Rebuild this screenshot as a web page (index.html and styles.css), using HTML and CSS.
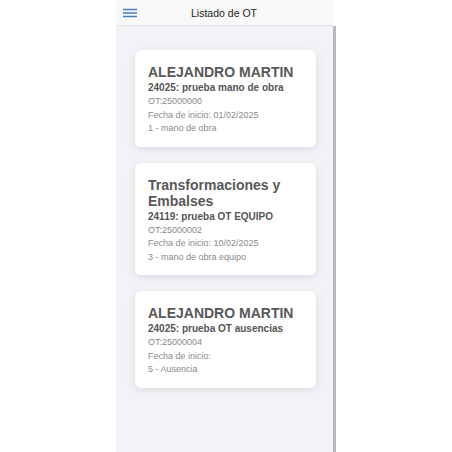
FILE: index.html
```html
<!DOCTYPE html>
<html lang="es">
<head>
<meta charset="utf-8">
<title>Listado de OT</title>
<link rel="stylesheet" href="styles.css">
</head>
<body>
<div class="app">
  <header class="header">
    <button class="menu" aria-label="Menú">
      <svg width="14" height="10" viewBox="0 0 14 10"><path d="M0 1.5H14M0 5H14M0 8.5H14" stroke="#4a7bbd" stroke-width="1.4" fill="none"/></svg>
    </button>
    <div class="title">Listado de OT</div>
  </header>
  <main class="content">
    <div class="card">
      <div class="name">ALEJANDRO MARTIN</div>
      <div class="job">24025: prueba mano de obra</div>
      <div class="meta">OT:25000000</div>
      <div class="meta">Fecha de inicio: 01/02/2025</div>
      <div class="meta">1 - mano de obra</div>
    </div>
    <div class="card">
      <div class="name">Transformaciones y Embalses</div>
      <div class="job">24119: prueba OT EQUIPO</div>
      <div class="meta">OT:25000002</div>
      <div class="meta">Fecha de inicio: 10/02/2025</div>
      <div class="meta">3 - mano de obra equipo</div>
    </div>
    <div class="card">
      <div class="name">ALEJANDRO MARTIN</div>
      <div class="job">24025: prueba OT ausencias</div>
      <div class="meta">OT:25000004</div>
      <div class="meta">Fecha de inicio:</div>
      <div class="meta">5 - Ausencia</div>
    </div>
  </main>
</div>
</body>
</html>
```

FILE: styles.css
```css
html, body {
  margin: 0;
  padding: 0;
  background: #ffffff;
  font-family: "Liberation Sans", Arial, sans-serif;
}
.app {
  width: 220px;
  height: 452px;
  margin: 0 auto;
  display: flex;
  flex-direction: column;
}
.header {
  height: 26px;
  box-sizing: border-box;
  margin-right: 3px;
  background: #f8f8f8;
  border-bottom: 1px solid #e3e3e5;
  display: flex;
  align-items: center;
  position: relative;
}
.menu {
  position: absolute;
  left: 7px;
  top: 8px;
  border: 0;
  padding: 0;
  background: none;
  width: 14px;
  height: 10px;
  display: block;
}
.menu svg { display: block; }
.title {
  flex: 1;
  text-align: center;
  font-size: 10.5px;
  color: #1e1e1e;
  padding-top: 1px;
  padding-right: 1px;
}
.content {
  flex: 1;
  background: #f2f3f7;
  border-right: 3px solid #b8b8b8;
  padding: 24px 17px 0 19px;
  display: flex;
  flex-direction: column;
  gap: 16px;
}
.card {
  background: #ffffff;
  border-radius: 6px;
  box-shadow: 0 2px 8px rgba(0, 0, 0, 0.10);
  padding: 14px 13px 11px 13px;
}
.name {
  font-size: 14px;
  font-weight: bold;
  line-height: 16px;
  color: #585858;
}
.job {
  margin-top: 1px;
  font-size: 10px;
  font-weight: bold;
  line-height: 14px;
  color: #555555;
}
.meta {
  font-size: 9px;
  line-height: 13.5px;
  color: #8a8a8a;
}
```
